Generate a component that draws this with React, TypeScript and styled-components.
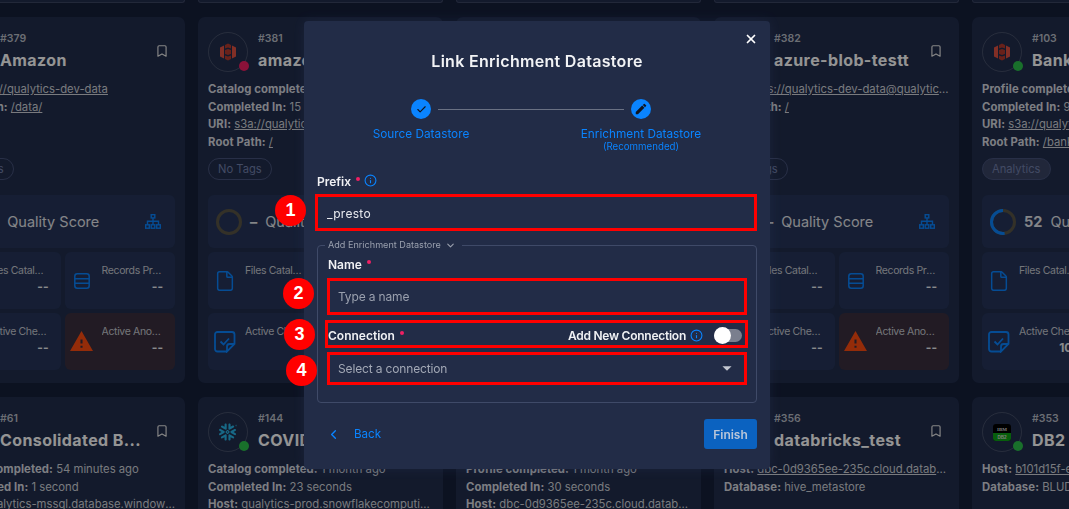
import * as React from 'react';
import styled, {createGlobalStyle} from 'styled-components';
import {Bookmark, Check, ChevronDown, ChevronLeft, File, Info, X} from 'lucide-react';
import {MdEdit, MdWarning, MdArrowDropDown} from 'react-icons/md';
import {SiSnowflake} from 'react-icons/si';

const GlobalStyle = createGlobalStyle`
  html, body {
    margin: 0;
    height: 100%;
    overflow: hidden;
    background: #151f3a;
    font-family: Inter, "Noto Sans", sans-serif;
  }
  * { box-sizing: border-box; }
`;

const Board = styled.div`
  display: grid;
  grid-template-columns: repeat(5, 245px);
  grid-template-rows: 3px 366px 366px;
  gap: 14px 13px;
  margin-left: -60px;
  height: 509px;
`;

const CardStub = styled.div`
  background: #212d4c;
  border: 1px solid #3b4563;
  border-top: 0;
  border-radius: 0 0 5px 5px;
`;

const CardShell = styled.section`
  background: #212d4c;
  border-radius: 7px;
  padding: 15px 10px 13px;
  min-width: 0;
`;

const CardHead = styled.header`
  display: flex;
  align-items: flex-start;
  height: 40px;
`;

const Avatar = styled.div`
  position: relative;
  flex: none;
  width: 40px;
  height: 40px;
  border: 1px solid rgba(255, 255, 255, 0.16);
  border-radius: 50%;
  display: flex;
  align-items: center;
  justify-content: center;
`;

const StatusDot = styled.span<{$tone: 'ok' | 'bad'}>`
  position: absolute;
  right: -2px;
  bottom: 0;
  width: 10px;
  height: 10px;
  border-radius: 50%;
  background: ${p => (p.$tone === 'ok' ? '#2cc14b' : '#f01f63')};
`;

const HeadText = styled.div`
  margin-left: 10px;
  flex: 1;
  min-width: 0;
`;

const CardId = styled.div`
  font-size: 10.5px;
  font-weight: 600;
  line-height: 14px;
  color: #b9bdc7;
`;

const CardName = styled.h3`
  margin: 3px 0 0;
  font-size: 16px;
  font-weight: 700;
  line-height: 22px;
  color: #fff;
  white-space: nowrap;
  letter-spacing: 0.4px;
`;

const SaveButton = styled.span`
  flex: none;
  margin: 12px 6px 0 0;
  color: #e6e6e6;
  display: flex;
`;

const Details = styled.div`
  margin-top: 9px;
  height: 69px;
  font-size: 11.3px;
  line-height: 17.7px;
  color: #d0d3da;
`;

const DetailLine = styled.div`
  white-space: nowrap;
  overflow: hidden;
  text-overflow: ellipsis;

  b {
    font-weight: 700;
    color: #d8dae0;
    letter-spacing: 0.1px;
  }

  a {
    color: inherit;
    text-decoration: underline;
  }
`;

const Tag = styled.span<{$filled?: boolean}>`
  display: inline-flex;
  align-items: center;
  height: 22px;
  margin-top: 8px;
  padding: 0 9px;
  border-radius: 11px;
  border: 1px solid #46527a;
  background: ${p => (p.$filled ? '#3a4465' : 'transparent')};
  color: #7381ad;
  font-size: 11.2px;
`;

const ScoreBox = styled.div`
  display: flex;
  align-items: center;
  height: 53px;
  margin-top: 15px;
  padding: 0 14px 0 8px;
  border-radius: 6px;
  background: #26355b;
`;

const ScoreNumber = styled.span`
  margin-left: 8px;
  font-size: 14.5px;
  font-weight: 700;
  color: #e4e6ea;
`;

const ScoreLabel = styled.span`
  margin-left: 8px;
  flex: 1;
  font-size: 14.5px;
  color: #e4e6ea;
  white-space: nowrap;
`;

const TileGrid = styled.div`
  display: grid;
  grid-template-columns: repeat(2, minmax(0, 1fr));
  gap: 4px;
  margin-top: 4px;
`;

const TileBox = styled.div<{$danger?: boolean}>`
  display: flex;
  height: 57px;
  padding: 0 12px 0 4px;
  border-radius: 6px;
  background: ${p => (p.$danger ? '#3c303e' : '#26355b')};
`;

const TileIcon = styled.span`
  flex: none;
  width: 26px;
  display: flex;
  align-items: center;
  justify-content: center;
  color: #0a84ff;
`;

const TileText = styled.div`
  flex: 1;
  min-width: 0;
  padding: 12px 0 0 7px;
  text-align: right;
`;

const TileLabel = styled.div`
  font-size: 10.5px;
  line-height: 14px;
  color: #c8cbd3;
  white-space: nowrap;
  overflow: hidden;
  text-overflow: ellipsis;
  letter-spacing: -0.35px;
`;

const TileValue = styled.div`
  margin-top: 1px;
  font-size: 12px;
  font-weight: 700;
  line-height: 16px;
  color: #eceef2;
`;

const Overlay = styled.div`
  position: fixed;
  inset: 0;
  background: rgba(0, 0, 0, 0.42);
  padding: 21px 0 0 304px;
`;

const Modal = styled.div`
  position: relative;
  width: 466px;
  height: 448px;
  padding: 29px 13px 0;
  background: #222c47;
  border-radius: 4px;
  box-shadow: 0 0 12px rgba(40, 52, 86, 0.35);
  color: #fff;
`;

const CloseButton = styled.span`
  position: absolute;
  top: 11px;
  right: 12px;
  display: flex;
  color: #fff;
`;

const Title = styled.h2`
  margin: 0;
  text-align: center;
  font-size: 16px;
  line-height: 22px;
  font-weight: 600;
  letter-spacing: 0.3px;
  color: #f2f3f5;
`;

const Stepper = styled.div`
  width: 440px;
  margin: 27px 0 0 -6px;
`;

const StepTrack = styled.div`
  display: flex;
  align-items: center;
  justify-content: center;
  gap: 7px;
`;

const StepDot = styled.span`
  width: 20px;
  height: 20px;
  border-radius: 50%;
  background: #0a84ff;
  color: #10151f;
  display: flex;
  align-items: center;
  justify-content: center;
`;

const StepLine = styled.span`
  width: 186px;
  height: 1px;
  background: #6a7183;
`;

const StepLabels = styled.div`
  display: grid;
  grid-template-columns: 1fr 1fr;
  margin-top: 8px;
  text-align: center;
  color: #0a84ff;
`;

const StepName = styled.div`
  font-size: 11.8px;
  line-height: 14px;
`;

const StepNote = styled.div`
  font-size: 9.7px;
  line-height: 12px;
`;

const FieldLabel = styled.div`
  display: flex;
  align-items: flex-start;
  font-size: 12px;
  font-weight: 600;
  line-height: 16px;
  color: #f0f1f4;
`;

const Required = styled.span`
  width: 4px;
  height: 4px;
  margin: 3px 0 0 5px;
  border-radius: 50%;
  background: #f01f63;
`;

const InfoMark = styled.span`
  display: inline-flex;
  margin-left: 4px;
  color: #0a84ff;
`;

const Marked = styled.div`
  position: relative;
  border: 3px solid #f00;
  color: #f0f1f4;
`;

const PrefixLabel = styled(FieldLabel)`
  margin-top: 21px;
`;

const PrefixField = styled(Marked)`
  margin: 4px 0 0 -2px;
  width: 442px;
  height: 37px;
`;

const TextInput = styled.input`
  width: 100%;
  height: 100%;
  padding: 1px 9px 0;
  border: 0;
  outline: 0;
  background: transparent;
  color: #e8eaef;
  font: 400 12px Inter, sans-serif;
  letter-spacing: 0.3px;

  &::placeholder {
    color: #9aa0ae;
    opacity: 1;
    letter-spacing: -0.15px;
  }
`;

const Group = styled.fieldset`
  margin: 8px 0 0;
  padding: 0 9px 17px;
  min-width: 0;
  border: 1px solid #3f4a68;
  border-radius: 4px;
`;

const GroupLegend = styled.legend`
  display: flex;
  align-items: center;
  gap: 4px;
  margin-left: -2px;
  padding: 0 6px 0 3px;
  height: 12px;
  font-size: 9.1px;
  line-height: 12px;
  color: #9aa0ae;
`;

const NameLabel = styled(FieldLabel)`
  margin: 6px 0 0 1px;
`;

const NameField = styled(Marked)`
  margin-top: 5px;
  height: 37px;

  ${TextInput} {
    padding: 0 9px 1px 8px;
  }
`;

const ConnectionRow = styled(Marked)`
  display: flex;
  align-items: center;
  margin: 5px -1px 0 -2px;
  height: 28px;
  padding: 2px 3px 0 0;
`;

const RowLabel = styled.span`
  font-size: 12px;
  font-weight: 600;
  display: flex;
  align-items: flex-start;
`;

const RowRight = styled.div`
  margin-left: auto;
  display: flex;
  align-items: center;
  font-size: 12px;
  font-weight: 600;
  letter-spacing: -0.25px;
`;

const Switch = styled.span`
  position: relative;
  width: 28px;
  height: 13px;
  margin-left: 11px;
  border-radius: 7px;
  background: #7a7f8e;
`;

const SwitchThumb = styled.span`
  position: absolute;
  left: 0;
  top: -2px;
  width: 17px;
  height: 17px;
  border-radius: 50%;
  background: #fff;
`;

const SelectField = styled(Marked)`
  display: flex;
  align-items: center;
  justify-content: space-between;
  margin-top: 4px;
  height: 33px;
  padding: 0 6px 1px 8px;
  font-size: 12px;
  letter-spacing: -0.15px;
  color: #a3a9b6;
`;

const Footer = styled.footer`
  display: flex;
  align-items: center;
  justify-content: space-between;
  margin-top: 16px;
`;

const BackLink = styled.span`
  display: flex;
  align-items: center;
  gap: 13px;
  padding-left: 9px;
  font-size: 11.6px;
  color: #0a84ff;
`;

const FinishButton = styled.button`
  width: 53px;
  height: 30px;
  border: 0;
  border-radius: 3px;
  background: #0b62c0;
  color: #b9c6d9;
  font: 600 12px Inter, sans-serif;
`;

const Badge = styled.span<{$left: number; $top: number}>`
  position: absolute;
  left: ${p => p.$left}px;
  top: ${p => p.$top}px;
  width: 31px;
  height: 31px;
  border-radius: 50%;
  background: #f00;
  color: #fff;
  font: 700 18px "Liberation Sans", sans-serif;
  display: flex;
  align-items: center;
  justify-content: center;
`;

const BucketLogo = () => (
  <svg width="16" height="18" viewBox="0 0 16 18">
    <path fill="#e05243" d="M0 4.5 4 2.5V15.5L0 13.5ZM12 2.5 16 4.5V13.5L12 15.5Z" />
    <path fill="#b43a2e" d="M5 2 8 0.5 11 2V5.5L8 4.5 5 5.5ZM5 7 8 6 11 7V11L8 12 5 11ZM5 12.5 8 13.5 11 12.5V16L8 17.5 5 16Z" />
  </svg>
);

const Db2Logo = () => (
  <svg width="18" height="17" viewBox="0 0 18 17">
    <rect width="18" height="17" rx="3" fill="#000" />
    <path fill="#0da316" d="M0 9H18V14A3 3 0 0 1 15 17H3A3 3 0 0 1 0 14Z" />
    <text x="9" y="7" fontSize="5" fontWeight="700" textAnchor="middle" fill="#d5d5d5" fontFamily="Liberation Serif">IBM</text>
    <text x="9" y="15" fontSize="4.6" fontWeight="700" textAnchor="middle" fill="#d5d5d5" fontFamily="Liberation Sans">DB2</text>
  </svg>
);

const TreeIcon = () => (
  <svg width="16" height="15" viewBox="0 0 16 15" fill="none" stroke="#0a84ff" strokeWidth="1.4">
    <rect x="6.2" y="0.7" width="3.6" height="3.2" />
    <rect x="0.7" y="10.8" width="3.6" height="3.4" />
    <rect x="6.2" y="10.8" width="3.6" height="3.4" />
    <rect x="11.7" y="10.8" width="3.6" height="3.4" />
    <path d="M8 3.9V10.8M2.5 10.8V7.3H13.5V10.8" />
  </svg>
);

const RecordsIcon = () => (
  <svg width="16" height="16" viewBox="0 0 16 16" fill="none" stroke="currentColor" strokeWidth="1.5">
    <rect x="0.8" y="0.8" width="14.4" height="14.4" rx="2.5" />
    <path d="M1 5.7H15M1 10.3H15" />
  </svg>
);

const ChecksIcon = () => (
  <svg width="22" height="22" viewBox="0 0 22 22" fill="none" stroke="currentColor" strokeWidth="1.8">
    <path d="M13 20.5H3.5A2.5 2.5 0 0 1 1 18V3.5A2.5 2.5 0 0 1 3.5 1H18A2.5 2.5 0 0 1 20.5 3.5V13L13 20.5V15.5A2.5 2.5 0 0 1 15.5 13H20.5" />
    <path d="M6.5 10.5 9.5 13.5 15 7.5" />
  </svg>
);

const ScoreRing = ({score}: {score?: number}) => {
  const length = 2 * Math.PI * 11.5;
  return (
    <svg width="26" height="26" viewBox="0 0 26 26" fill="none" strokeWidth="3" style={{flex: 'none'}}>
      <circle cx="13" cy="13" r="11.5" stroke="#5a5545" />
      {score !== undefined && (
        <circle
          cx="13"
          cy="13"
          r="11.5"
          stroke="#0a84ff"
          strokeDasharray={`${(length * score) / 100} ${length}`}
          transform="translate(26 0) scale(-1 1) rotate(-90 13 13)"
        />
      )}
    </svg>
  );
};

const Tile = ({
  icon,
  label,
  value = '--',
  danger,
}: {
  icon: React.ReactNode;
  label: string;
  value?: string;
  danger?: boolean;
}) => (
  <TileBox $danger={danger}>
    <TileIcon>{icon}</TileIcon>
    <TileText>
      <TileLabel>{label}</TileLabel>
      <TileValue>{value}</TileValue>
    </TileText>
  </TileBox>
);

interface Line {
  key: string;
  value: string;
  link?: boolean;
}

interface CardProps {
  id?: string;
  name?: string;
  logo?: React.ReactNode;
  status?: 'ok' | 'bad';
  lines?: Line[];
  tag?: string;
  score?: number;
  checks?: string;
  stats?: boolean;
}

const Card = ({id, name, logo, status, lines = [], tag = 'No Tags', score, checks, stats}: CardProps) => (
  <CardShell>
    <CardHead>
      <Avatar>
        {logo}
        {status && <StatusDot $tone={status} />}
      </Avatar>
      <HeadText>
        <CardId>{id}</CardId>
        <CardName>{name}</CardName>
      </HeadText>
      <SaveButton>
        <Bookmark size={14} strokeWidth={2} />
      </SaveButton>
    </CardHead>
    <Details>
      {lines.map(line => (
        <DetailLine key={line.key}>
          <b>{line.key}:</b> {line.link ? <a>{line.value}</a> : line.value}
        </DetailLine>
      ))}
    </Details>
    {stats && (
      <>
        <Tag $filled={tag !== 'No Tags'}>{tag}</Tag>
        <ScoreBox>
          <ScoreRing score={score} />
          <ScoreNumber>{score ?? '–'}</ScoreNumber>
          <ScoreLabel>Quality Score</ScoreLabel>
          <TreeIcon />
        </ScoreBox>
        <TileGrid>
          <Tile icon={<File size={22} strokeWidth={1.6} />} label="Files Cataloged" />
          <Tile icon={<RecordsIcon />} label="Records Profiled" />
          <Tile icon={<ChecksIcon />} label="Active Checks" value={checks} />
          <Tile icon={<MdWarning size={25} color="#ff4c11" />} label="Active Anomalies" danger />
        </TileGrid>
      </>
    )}
  </CardShell>
);

const App = () => (
  <>
    <GlobalStyle />
    <Board>
      {[0, 1, 2, 3, 4].map(i => (
        <CardStub key={i} />
      ))}
      <Card
        id="#379"
        name="Amazon"
        stats
        lines={[
          {key: 'URI', value: 's3a://qualytics-dev-data', link: true},
          {key: 'Root Path', value: '/data/', link: true},
        ]}
      />
      <Card
        id="#381"
        name="amazon-s3"
        logo={<BucketLogo />}
        status="bad"
        stats
        lines={[
          {key: 'Catalog completed', value: '1 month ago'},
          {key: 'Completed In', value: '15 seconds'},
          {key: 'URI', value: 's3a://qualytics-dev-data', link: true},
          {key: 'Root Path', value: '/', link: true},
        ]}
      />
      <CardShell />
      <Card
        id="#382"
        name="azure-blob-testt"
        stats
        lines={[
          {key: 'URI', value: 'abfs://qualytics-dev-data@qualytics.dfs.core', link: true},
          {key: 'Root Path', value: '/', link: true},
        ]}
      />
      <Card
        id="#103"
        name="Bank Dataset"
        logo={<BucketLogo />}
        status="ok"
        tag="Analytics"
        score={52}
        checks="100"
        stats
        lines={[
          {key: 'Profile completed', value: '1 month ago'},
          {key: 'Completed In', value: '9 seconds'},
          {key: 'URI', value: 's3a://qualytics-dev-data', link: true},
          {key: 'Root Path', value: '/bank_dataset/', link: true},
        ]}
      />
      <Card
        id="#61"
        name="Consolidated B..."
        lines={[
          {key: 'Profile completed', value: '54 minutes ago'},
          {key: 'Completed In', value: '1 second'},
          {key: 'Host', value: 'qualytics-mssql.database.windows.net'},
        ]}
      />
      <Card
        id="#144"
        name="COVID-19"
        logo={<SiSnowflake size={18} color="#29b5e8" />}
        status="ok"
        lines={[
          {key: 'Catalog completed', value: '1 month ago'},
          {key: 'Completed In', value: '23 seconds'},
          {key: 'Host', value: 'qualytics-prod.snowflakecomputing.com'},
        ]}
      />
      <Card
        lines={[
          {key: 'Profile completed', value: '1 month ago'},
          {key: 'Completed In', value: '30 seconds'},
          {key: 'Host', value: 'dbc-0d9365ee-235c.cloud.databricks.com'},
        ]}
      />
      <Card
        id="#356"
        name="databricks_test"
        lines={[
          {key: 'Host', value: 'dbc-0d9365ee-235c.cloud.databricks.com', link: true},
          {key: 'Database', value: 'hive_metastore'},
        ]}
      />
      <Card
        id="#353"
        name="DB2"
        logo={<Db2Logo />}
        status="ok"
        lines={[
          {key: 'Host', value: 'b101d15f-e79b-4832', link: true},
          {key: 'Database', value: 'BLUDB'},
        ]}
      />
    </Board>
    <Overlay>
      <Modal>
        <CloseButton>
          <X size={14} strokeWidth={3} />
        </CloseButton>
        <Title>Link Enrichment Datastore</Title>
        <Stepper>
          <StepTrack>
            <StepDot>
              <Check size={11} strokeWidth={2.5} />
            </StepDot>
            <StepLine />
            <StepDot>
              <MdEdit size={14} />
            </StepDot>
          </StepTrack>
          <StepLabels>
            <StepName>Source Datastore</StepName>
            <div>
              <StepName>Enrichment Datastore</StepName>
              <StepNote>(Recommended)</StepNote>
            </div>
          </StepLabels>
        </Stepper>
        <PrefixLabel>
          Prefix
          <Required />
          <InfoMark>
            <Info size={13} />
          </InfoMark>
        </PrefixLabel>
        <PrefixField>
          <TextInput defaultValue="_presto" />
          <Badge $left={-43} $top={-2}>1</Badge>
        </PrefixField>
        <Group>
          <GroupLegend>
            Add Enrichment Datastore
            <ChevronDown size={11} strokeWidth={2.4} />
          </GroupLegend>
          <NameLabel>
            Name
            <Required />
          </NameLabel>
          <NameField>
            <TextInput placeholder="Type a name" />
            <Badge $left={-47} $top={-3}>2</Badge>
          </NameField>
          <ConnectionRow>
            <RowLabel>
              Connection
              <Required />
            </RowLabel>
            <RowRight>
              Add New Connection
              <InfoMark>
                <Info size={13} />
              </InfoMark>
              <Switch>
                <SwitchThumb />
              </Switch>
            </RowRight>
            <Badge $left={-44} $top={-4}>3</Badge>
          </ConnectionRow>
          <SelectField>
            Select a connection
            <MdArrowDropDown size={22} color="#c3c7d0" />
            <Badge $left={-44} $top={0}>4</Badge>
          </SelectField>
        </Group>
        <Footer>
          <BackLink>
            <ChevronLeft size={15} strokeWidth={2.2} />
            Back
          </BackLink>
          <FinishButton>Finish</FinishButton>
        </Footer>
      </Modal>
    </Overlay>
  </>
);

export default App;
